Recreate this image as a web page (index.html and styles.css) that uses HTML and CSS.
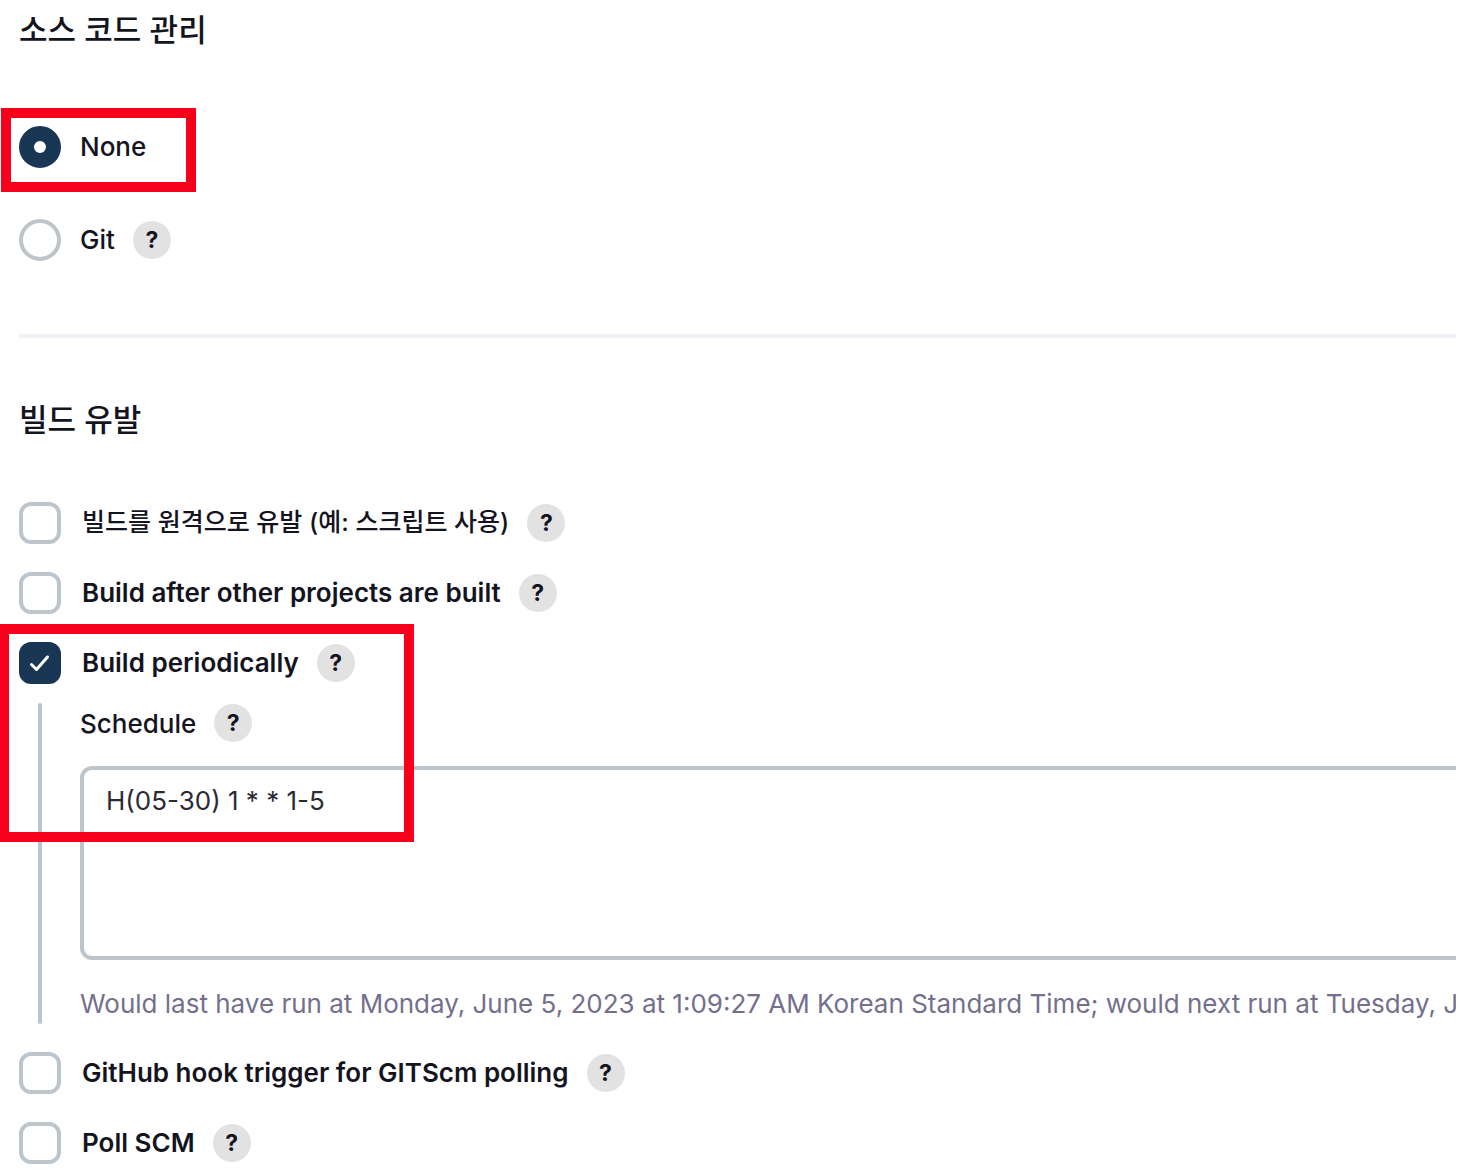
FILE: index.html
```html
<!DOCTYPE html>
<html lang="ko">
<head>
<meta charset="utf-8">
<meta name="viewport" content="width=device-width, initial-scale=1">
<title>Jenkins</title>
    <link rel="stylesheet" href="styles.css">
</head>
<body>
    <main class="config">
        <section>
            <h2>소스 코드 관리</h2>
            <div class="radio-list">
                <div class="row">
                    <input type="radio" id="scm-none" name="scm" checked>
                    <label for="scm-none">None</label>
                    <span class="highlight highlight-scm"></span>
                </div>
                <div class="row">
                    <input type="radio" id="scm-git" name="scm">
                    <label for="scm-git">Git</label>
                    <a class="help" href="#">?</a>
                </div>
            </div>
        </section>
        <hr>
        <section>
            <h2>빌드 유발</h2>
            <div class="check-list">
                <div class="row">
                    <input type="checkbox" id="remote">
                    <label class="korean" for="remote">빌드를 원격으로 유발 (예: 스크립트 사용)</label>
                    <a class="help" href="#">?</a>
                </div>
                <div class="row">
                    <input type="checkbox" id="after">
                    <label for="after">Build after other projects are built</label>
                    <a class="help" href="#">?</a>
                </div>
                <div class="trigger">
                    <div class="row">
                        <span class="check">
                            <input type="checkbox" id="periodic" checked>
                            <svg viewBox="0 0 42 42" fill="none" stroke="#fff" stroke-width="3" stroke-linecap="round" stroke-linejoin="round"><path d="M12.5 22.5l5 5 11-12.5"/></svg>
                        </span>
                        <label for="periodic">Build periodically</label>
                        <a class="help" href="#">?</a>
                    </div>
                    <div class="nested">
                        <div class="schedule">
                            <label for="spec">Schedule</label>
                            <a class="help" href="#">?</a>
                        </div>
                        <textarea id="spec" spellcheck="false">H(05-30) 1 * * 1-5</textarea>
                        <p>Would last have run at Monday, June 5, 2023 at 1:09:27 AM Korean Standard Time; would next run at Tuesday, Ju</p>
                    </div>
                    <span class="highlight highlight-periodic"></span>
                </div>
                <div class="row">
                    <input type="checkbox" id="github">
                    <label for="github">GitHub hook trigger for GITScm polling</label>
                    <a class="help" href="#">?</a>
                </div>
                <div class="row">
                    <input type="checkbox" id="poll">
                    <label for="poll">Poll SCM</label>
                    <a class="help" href="#">?</a>
                </div>
            </div>
        </section>
    </main>
</body>
</html>
```
FILE: styles.css
```css
* {
    box-sizing: border-box;
}
body {
    margin: 0;
    background-color: #fff;
    color: #14141f;
    font-family: Inter, "Noto Sans CJK KR", sans-serif;
    font-size: 26px;
    font-weight: 500;
}
.config {
    margin-right: 2px;
    padding: 0 0 8px 19px;
    overflow: hidden;
}
h2 {
    margin: 0 0 52px;
    font-size: 31px;
    font-weight: 500;
    line-height: 60px;
}
hr {
    height: 4px;
    margin: 59px 0 52px;
    border: 0;
    background-color: #f0f0f7;
}
.row {
    display: flex;
    align-items: center;
    position: relative;
    height: 42px;
}
.radio-list {
    display: flex;
    flex-direction: column;
    gap: 51px;
    padding: 14px 0;
}
.check-list {
    display: flex;
    flex-direction: column;
    gap: 28px;
}
input {
    appearance: none;
    flex: none;
    width: 42px;
    height: 42px;
    margin: 0;
    border: 4px solid #bcc5cb;
    border-radius: 12px;
    background-color: #fff;
}
input[type="radio"] {
    border-radius: 50%;
}
input[type="radio"]:checked {
    border: 15px solid #193655;
}
input[type="checkbox"]:checked {
    border-color: #193655;
    background-color: #193655;
}
.row label {
    margin: 0 0 2px 19px;
}
.check-list .row label {
    margin-left: 21px;
    font-weight: 600;
}
.check-list .row .korean {
    font-size: 25px;
    font-weight: 500;
    line-height: 30px;
}
.check {
    display: grid;
}
.check input,
.check svg {
    grid-area: 1 / 1;
}
.check svg {
    position: relative;
    width: 42px;
    height: 42px;
    pointer-events: none;
}
.help {
    display: flex;
    align-items: center;
    justify-content: center;
    width: 38px;
    height: 38px;
    margin-left: 18px;
    border-radius: 50%;
    background-color: #e2e2e3;
    color: #14141f;
    font-size: 23px;
    font-weight: 700;
    text-decoration: none;
}
.trigger {
    position: relative;
}
.nested {
    position: relative;
    margin: 19px 0 0 19px;
    padding-left: 42px;
}
.nested::before {
    content: "";
    position: absolute;
    top: 0;
    bottom: 0;
    left: 0;
    width: 4px;
    border-radius: 2px;
    background-color: #bcc5cb;
}
.schedule {
    display: flex;
    align-items: center;
    height: 40px;
}
/* the field and its message run past the right edge of the form */
textarea {
    display: block;
    width: calc(100% + 40px);
    height: 194px;
    margin: 23px 0 24px;
    padding: 14px 22px;
    border: 4px solid #bcc5cb;
    border-radius: 12px;
    background-color: #fff;
    color: #2b2b36;
    font-family: inherit;
    font-size: 26px;
    font-weight: 400;
    line-height: 34px;
    resize: none;
}
.nested p {
    margin: 0;
    color: #736f8d;
    font-weight: 400;
    line-height: 40px;
    white-space: nowrap;
}
.highlight {
    position: absolute;
    border: 10px solid #f6001c;
    pointer-events: none;
}
.highlight-scm {
    top: -18px;
    left: -18px;
    width: 195px;
    height: 84px;
}
.highlight-periodic {
    top: -18px;
    left: -20px;
    width: 415px;
    height: 218px;
}
```
